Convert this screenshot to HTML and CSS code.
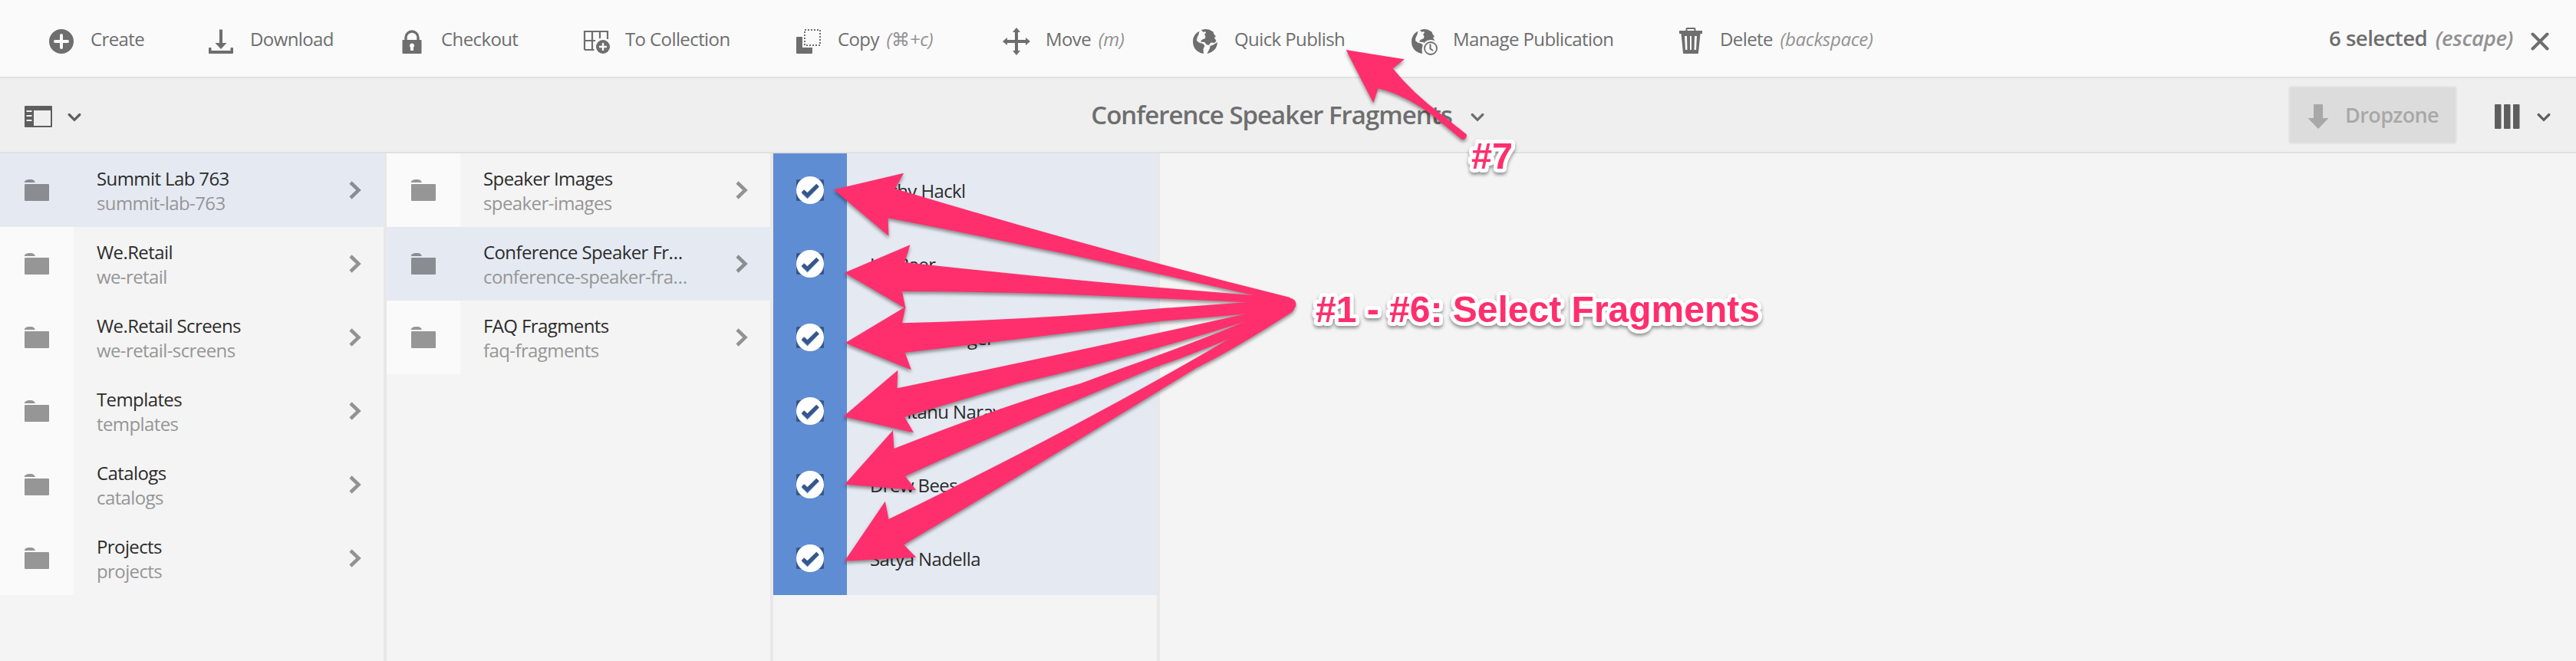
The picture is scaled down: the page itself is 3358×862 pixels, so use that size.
FILE: index.html
```
<!DOCTYPE html>
<html lang="en">
<head>
<meta charset="utf-8">
<title>Conference Speaker Fragments</title>
<link rel="stylesheet" href="styles.css">
</head>
<body>
<svg class="defs" width="0" height="0">
  <symbol id="folder" viewBox="0 0 32 28"><path d="M0 4V2.500Q2 0 5 0h4q2 0 3.500 1.500L14 4z"/><rect y="6" width="32" height="22" rx="1"/></symbol>
  <symbol id="next" viewBox="0 0 16 24"><path d="M2 2l10.500 10L2 22" fill="none" stroke="currentColor" stroke-width="4.500"/></symbol>
  <symbol id="down" viewBox="0 0 18 12"><path d="M2.200 2.500L9 9.300l6.800-6.800" fill="none" stroke="currentColor" stroke-width="3.200" stroke-linecap="round"/></symbol>
  <symbol id="check" viewBox="0 0 36 36"><rect y="4" width="36" height="28" rx="1.500" fill="#38568a"/><circle cx="18" cy="18" r="18" fill="#fff"/><path d="M8.500 20l6 6L28 12" fill="none" stroke="#5f8dd3" stroke-width="5"/><path d="M8.500 19l6 5.500L28 11.500" fill="none" stroke="#38568a" stroke-width="5"/></symbol>
  <symbol id="globe" viewBox="0 0 36 36"><path d="M10.500 4.500Q2 9 2 18q0 8 5.500 12.500 4 3 8.500 3.500l-.5-6 2-4.500L15 21l-5-1.500L7 17l.5-4 2-4zM13 3l5-1 5 .500 5.500 3 1 3 2.500 3-2 1.500 2.500 4.500-2.500 2.500-4.500-.5-3 3.500-3-1-2-3-5.500-.5 1.500-2.500 4.500-2 .5-3-1.500-2 2-2.500-1-1.500-2.500 1zM24.500 24l4-1.500L34 19q0 9-9 13.500L20.500 34l3.500-7z"/></symbol>
</svg>

<header class="toolbar">
  <div class="actions">
    <div class="action"><svg class="ico" viewBox="0 0 36 36"><circle cx="18" cy="18" r="16"/><path d="M18 10v16M10 18h16" stroke="#fafafa" stroke-width="4" stroke-linecap="round"/></svg><span>Create</span></div>
    <div class="action"><svg class="ico" viewBox="0 0 36 36"><path d="M16 2.500h4V20h5.500L18 28l-7.500-8H16zM2 27q0-1 1-1h1.500q1 0 1 1v3h25v-3q0-1 1-1H33q1 0 1 1v6q0 1-1 1H3q-1 0-1-1z"/></svg><span>Download</span></div>
    <div class="action"><svg class="ico" viewBox="0 0 36 36"><path d="M10 17v-4a8 8 0 0 1 16 0v4" fill="none" stroke="currentColor" stroke-width="3.400"/><rect x="5.500" y="16" width="25" height="18" rx="1"/><path d="M18 20.500a3 3 0 0 1 2 5.300V30h-4v-4.200a3 3 0 0 1 2-5.300z" fill="#fafafa"/></svg><span>Checkout</span></div>
    <div class="action"><svg class="ico" viewBox="0 0 36 36"><path d="M3 29V5h30v10M15.500 29H3M3 17h14M13 5v24M23 5v9" fill="none" stroke="currentColor" stroke-width="2.200"/><circle cx="27" cy="25" r="11" fill="#fafafa"/><circle cx="27" cy="25" r="9"/><path d="M27 20v10M22 25h10" stroke="#fafafa" stroke-width="2.400"/></svg><span>To Collection</span></div>
    <div class="action"><svg class="ico" viewBox="0 0 36 36"><path d="M3 12h7v14h13v7q0 1-1 1H3q-1 0-1-1V13q0-1 1-1z"/><rect x="13" y="3" width="20" height="20" fill="none" stroke="currentColor" stroke-width="2" stroke-dasharray="2 2"/></svg><span>Copy <i>(⌘+c)</i></span></div>
    <div class="action"><svg class="ico" viewBox="0 0 36 36"><path d="M18 4v28M4 18h28" stroke="currentColor" stroke-width="4"/><path d="M18 0l5 6H13zM18 36l5-6H13zM0 18l6-5v10zM36 18l-6-5v10z"/></svg><span>Move <i>(m)</i></span></div>
    <div class="action"><svg class="ico"><use href="#globe"/></svg><span>Quick Publish</span></div>
    <div class="action"><svg class="ico" viewBox="0 0 36 36"><use href="#globe"/><circle cx="27" cy="27" r="11" fill="#fafafa"/><circle cx="27" cy="27" r="8" fill="none" stroke="currentColor" stroke-width="1.800"/><path d="M26.500 21.500v6l3.500 2.500" fill="none" stroke="currentColor" stroke-width="2"/></svg><span>Manage Publication</span></div>
    <div class="action"><svg class="ico" viewBox="0 0 36 36"><path d="M3 4h8.500V2Q11.500 0 13 0h10q1.500 0 1.500 2v2H33v4h-2.500L28 33q0 1-1 1H9q-1 0-1-1L5.500 8H3zM13.500 4h9V2h-9zM10 11l1 18h2.500L13 11zM17 11v18h2V11zM23 11l-.5 18H25l1-18z" fill-rule="evenodd"/></svg><span>Delete <i>(backspace)</i></span></div>
  </div>
  <div class="selection"><span>6 selected <i>(escape)</i></span><svg class="close" viewBox="0 0 24 24"><path d="M2.500 2.500l19 19M21.500 2.500l-19 19" stroke="currentColor" stroke-width="4" stroke-linecap="round"/></svg></div>
</header>

<nav class="pathbar">
  <div class="side">
    <svg class="rail" viewBox="0 0 36 28"><path d="M1 0h34q1 0 1 1v26q0 1-1 1H1q-1 0-1-1V1q0-1 1-1zM12 6v20h22V6zM2.500 6v2h7V6zM2.500 12v2h7v-2zM2.500 18v2h7v-2z" fill-rule="evenodd"/></svg>
    <svg class="chev"><use href="#down"/></svg>
  </div>
  <h1 class="title"><span>Conference Speaker Fragments</span><svg class="chev"><use href="#down"/></svg></h1>
  <div class="side side-end">
    <div class="dropzone"><svg class="drop" viewBox="0 0 28 32"><path d="M8 1q0-1 1-1h10q1 0 1 1v17h7.500L14 32 .5 18H8z"/></svg><span>Dropzone</span></div>
    <svg class="cols" viewBox="0 0 33 32"><rect width="8.500" height="32" rx="1"/><rect x="12" width="8.500" height="32" rx="1"/><rect x="24" width="8.500" height="32" rx="1"/></svg>
    <svg class="chev"><use href="#down"/></svg>
  </div>
</nav>

<main class="columns">
  <section class="column">
    <div class="row active"><div class="thumb"><svg class="folder"><use href="#folder"/></svg></div><div class="text"><b>Summit Lab 763</b><small>summit-lab-763</small></div><svg class="next"><use href="#next"/></svg></div>
    <div class="row"><div class="thumb"><svg class="folder"><use href="#folder"/></svg></div><div class="text"><b>We.Retail</b><small>we-retail</small></div><svg class="next"><use href="#next"/></svg></div>
    <div class="row"><div class="thumb"><svg class="folder"><use href="#folder"/></svg></div><div class="text"><b>We.Retail Screens</b><small>we-retail-screens</small></div><svg class="next"><use href="#next"/></svg></div>
    <div class="row"><div class="thumb"><svg class="folder"><use href="#folder"/></svg></div><div class="text"><b>Templates</b><small>templates</small></div><svg class="next"><use href="#next"/></svg></div>
    <div class="row"><div class="thumb"><svg class="folder"><use href="#folder"/></svg></div><div class="text"><b>Catalogs</b><small>catalogs</small></div><svg class="next"><use href="#next"/></svg></div>
    <div class="row"><div class="thumb"><svg class="folder"><use href="#folder"/></svg></div><div class="text"><b>Projects</b><small>projects</small></div><svg class="next"><use href="#next"/></svg></div>
  </section>
  <section class="column">
    <div class="row"><div class="thumb"><svg class="folder"><use href="#folder"/></svg></div><div class="text"><b>Speaker Images</b><small>speaker-images</small></div><svg class="next"><use href="#next"/></svg></div>
    <div class="row active"><div class="thumb"><svg class="folder"><use href="#folder"/></svg></div><div class="text"><b>Conference Speaker Fr…</b><small>conference-speaker-fra…</small></div><svg class="next"><use href="#next"/></svg></div>
    <div class="row"><div class="thumb"><svg class="folder"><use href="#folder"/></svg></div><div class="text"><b>FAQ Fragments</b><small>faq-fragments</small></div><svg class="next"><use href="#next"/></svg></div>
  </section>
  <section class="column">
    <div class="row selected"><div class="thumb"><svg class="check"><use href="#check"/></svg></div><div class="text"><b>Cathy Hackl</b></div></div>
    <div class="row selected"><div class="thumb"><svg class="check"><use href="#check"/></svg></div><div class="text"><b>Jay Baer</b></div></div>
    <div class="row selected"><div class="thumb"><svg class="check"><use href="#check"/></svg></div><div class="text"><b>Adam Bellinger</b></div></div>
    <div class="row selected"><div class="thumb"><svg class="check"><use href="#check"/></svg></div><div class="text"><b>Shantanu Narayen</b></div></div>
    <div class="row selected"><div class="thumb"><svg class="check"><use href="#check"/></svg></div><div class="text"><b>Drew Bees</b></div></div>
    <div class="row selected"><div class="thumb"><svg class="check"><use href="#check"/></svg></div><div class="text"><b>Satya Nadella</b></div></div>
  </section>
</main>

<svg class="notes" viewBox="0 0 3358 862">
  <g class="arrow">
    <path d="M1101 731.700L1153.900 653.700L1158.500 677Q1430 545 1623.600 429Q1655 408 1676 395A7 7 0 0 1 1684 407Q1610 455 1559.300 480Q1380 590 1178.200 710.300L1194.300 726.700Z"/>
    <path d="M1101.100 631.700L1164 561.300L1165.400 585Q1310 528 1408.700 500L1462.900 480Q1560 446 1626 418L1678 392A7 7 0 0 1 1684 405Q1590 450 1503.300 480Q1330 552 1180 621L1194.300 639.300Z"/>
    <path d="M1099.300 543.300L1170.400 482.700L1169.500 506.300Q1400 459 1630 408L1680 391A7 7 0 0 1 1684 404L1628 418Q1480 465 1327.500 500Q1250 522 1179.200 543.700L1191.100 564.300Z"/>
    <path d="M1101.600 447.300L1180.500 400L1176 421.300Q1350 417 1511.600 402.300L1682 390A7 7 0 0 1 1683 404Q1600 412 1511.600 419Q1340 441 1179.600 459.700L1187.900 482.300Z"/>
    <path d="M1100.700 355.700L1186.500 319.300L1179.200 342Q1350 361 1511.600 375L1682 389A7 7 0 0 1 1682 403L1655.700 396.300Q1590 392 1511.600 389.300Q1340 380 1176 380L1180.500 402.300Z"/>
    <path d="M1086.900 247.300L1178.200 225.700L1166.800 246Q1425 324 1681 387.700A8 8 0 0 1 1680 402L1642 387Q1400 331 1157.600 284.300L1158.500 307.700Z"/>
    <path d="M1754.600 65L1830.900 77.300L1815.700 89.300Q1841 121 1880 150L1911.500 175A5 5 0 0 1 1905 181.500L1868 151Q1832 124 1796.500 115.300L1790.300 134.300Z"/>
  </g>
  <text class="label" x="1715" y="420" textLength="579" lengthAdjust="spacingAndGlyphs">#1 - #6: Select Fragments</text>
  <text class="label" x="1918" y="220" textLength="54" lengthAdjust="spacingAndGlyphs">#7</text>
</svg>
</body>
</html>
```
FILE: styles.css
```
* { box-sizing: border-box; }
body {
  margin: 0;
  width: 3358px;
  height: 862px;
  position: relative;
  overflow: hidden;
  display: flex;
  flex-direction: column;
  background: #f4f4f4;
  color: #6e6e6e;
  font: 24px/32px "Open Sans", "DejaVu Sans", sans-serif;
  letter-spacing: -0.6px;
}
svg { display: block; flex: none; fill: currentColor; }
.defs { position: absolute; }
i { color: #929292; margin-left: 4px; letter-spacing: -0.3px; }

.toolbar {
  height: 102px;
  display: flex;
  justify-content: space-between;
  padding: 0 35px 0 62px;
  background: #fafafa;
  border-bottom: 2px solid #e0e0e0;
}
.actions {
  display: grid;
  grid-template-columns: 208px 249px 240px 277px 271px 246px 285px 348px 300px;
}
.action { display: flex; align-items: center; gap: 20px; white-space: nowrap; }
.action span { padding-top: 1px; }
.ico { width: 36px; height: 36px; margin-top: 8px; }
.selection {
  display: flex;
  align-items: center;
  gap: 23px;
  font-size: 27.5px;
  font-weight: 600;
  letter-spacing: -0.5px;
}
.close { width: 24px; height: 24px; margin-top: 8px; }

.pathbar {
  height: 98px;
  display: flex;
  align-items: center;
  padding: 0 33px 0 32px;
  background: #efefef;
  border-bottom: 2px solid #e0e0e0;
  color: #5e5e5e;
}
.side { flex: 1; display: flex; align-items: center; }
.side-end { justify-content: flex-end; }
.rail { width: 36px; height: 28px; margin: 4px 20px 0 0; }
.chev { width: 18px; height: 12px; margin-top: 6px; }
.title {
  display: flex;
  align-items: center;
  gap: 24px;
  margin: 0;
  color: #6e6e6e;
  font-size: 33px;
  font-weight: 600;
  letter-spacing: -1px;
}
.dropzone {
  width: 220px;
  height: 76px;
  display: flex;
  align-items: center;
  gap: 21px;
  padding-left: 23px;
  margin-right: 49px;
  background: #dcdcdc;
  border: 2px solid #e5e5e5;
  border-radius: 4px;
  color: #a8a8a8;
  font-size: 27px;
  font-weight: 600;
}
.drop { width: 28px; height: 32px; margin-top: 4px; }
.cols { width: 33px; height: 32px; margin: 4px 22px 0 0; }

.columns { flex: 1; display: flex; }
.column { width: 504px; border-right: 4px solid #e8e8e8; }
.row { height: 96px; display: flex; align-items: center; padding-right: 29px; }
.thumb {
  width: 96px;
  height: 96px;
  display: flex;
  align-items: center;
  justify-content: center;
  background: #fafafa;
  color: rgba(0, 0, 0, .4);
}
.folder { width: 32px; height: 28px; }
.check { width: 36px; height: 36px; }
.next { width: 16px; height: 24px; color: rgba(0, 0, 0, .4); }
.text { flex: 1; padding: 2px 0 0 30px; white-space: nowrap; }
.text b { display: block; font-weight: 400; color: #2c2c2c; }
.text small { display: block; font-size: 24px; color: #969696; }
.active, .selected { background: #e5eaf2; }
.active .thumb { background: none; }
.selected .thumb { background: #5f8dd3; }

/* Annotation layer drawn over the whole page */
.notes { position: absolute; left: 0; top: 0; width: 3358px; height: 862px; }
.arrow { fill: #ff2f6d; filter: drop-shadow(0 3px 2px rgba(0, 0, 0, .4)); }
.label {
  font: bold 48px "Liberation Sans", Arial, sans-serif;
  letter-spacing: 0;
  fill: #ff2f6d;
  stroke: #fff;
  stroke-width: 10px;
  stroke-linejoin: round;
  paint-order: stroke;
  filter: drop-shadow(0 3px 2px rgba(0, 0, 0, .4));
}
```
